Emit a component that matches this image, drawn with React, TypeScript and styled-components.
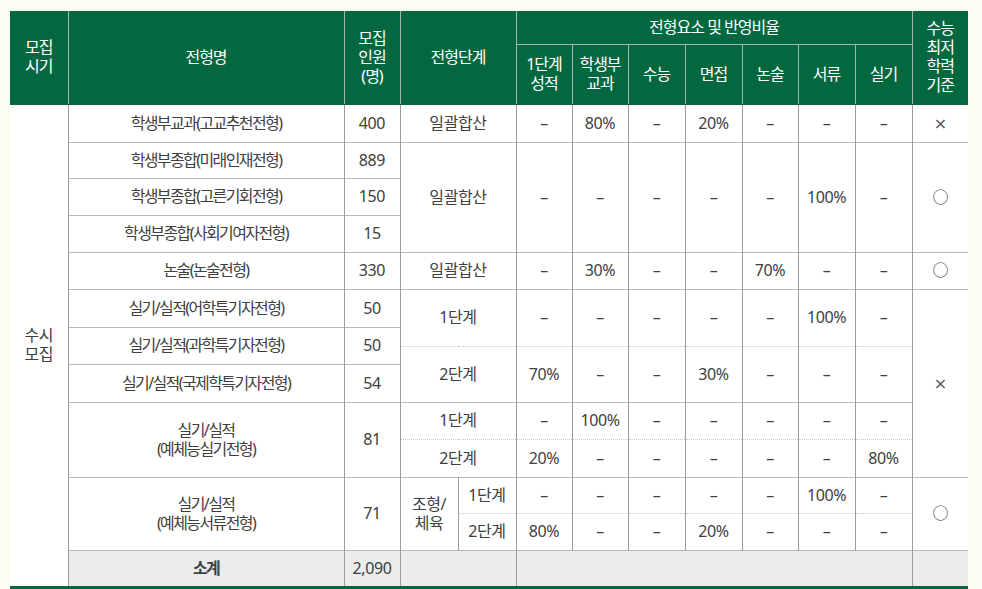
import React from 'react';
import styled, { createGlobalStyle } from 'styled-components';

const Global = createGlobalStyle`
  html, body { margin: 0; padding: 0; background: #fdfcf3; }
  body { font-family: "Noto Sans", "Noto Sans CJK KR", sans-serif; }
`;

const GREEN = '#03683f';
const V_LINE = '#9c9c9c';
const H_LINE = '#b9b9b9';
const SUB_LINE = '#c9c9c9';

const Page = styled.div`
  width: 982px;
  height: 589px;
  box-sizing: border-box;
  padding: 11px 0 0 10px;
  overflow: hidden;
`;

const Table = styled.table`
  border-collapse: collapse;
  table-layout: fixed;
  width: 958px;
  background: #fff;
  color: #404040;
  font-size: 16px;
  border-bottom: 3px solid ${GREEN};
`;

const Col = styled.col<{ $w: number }>`
  width: ${(p) => p.$w}px;
`;

const Row = styled.tr<{ $h: number }>`
  height: ${(p) => p.$h}px;
`;

const Th = styled.th<{ $first?: boolean; $last?: boolean; $split?: boolean }>`
  background: ${GREEN};
  color: #fff;
  font-weight: 400;
  line-height: 19px;
  padding: 0;
  text-align: center;
  vertical-align: middle;
  letter-spacing: -1px;
  border-left: ${(p) => (p.$first ? 'none' : '1px solid #a3b6ab')};
  border-right: ${(p) => (p.$last ? 'none' : '1px solid #a3b6ab')};
  border-bottom: ${(p) => (p.$split ? '1px solid #a3b6ab' : `1px solid ${GREEN}`)};
  border-top: none;
`;

const Td = styled.td<{
  $first?: boolean;
  $last?: boolean;
  $sub?: boolean;
  $tight?: boolean;
  $total?: boolean;
  $bold?: boolean;
}>`
  padding: 0;
  text-align: center;
  vertical-align: middle;
  line-height: 19px;
  white-space: nowrap;
  letter-spacing: ${(p) => (p.$tight ? '-1.6px' : '-0.4px')};
  font-weight: ${(p) => (p.$bold ? 700 : 400)};
  background: ${(p) => (p.$total ? '#ececec' : '#fff')};
  border-left: ${(p) => (p.$first ? 'none' : `1px solid ${V_LINE}`)};
  border-right: ${(p) => (p.$last ? 'none' : `1px solid ${V_LINE}`)};
  border-top: ${(p) => (p.$sub ? `1px dotted ${SUB_LINE}` : `1px solid ${H_LINE}`)};
  border-bottom: none;
`;

const Cross = styled.span`
  font-size: 16px;
  font-family: "DejaVu Sans", sans-serif;
  color: #555;
`;

const D = '–';

const widths = [58, 276, 56, 58, 58, 56, 56, 57, 57, 56, 57, 57, 56];

const Elements = ({ vals, span, sub }: { vals: string[]; span?: number; sub?: boolean }) => (
  <>
    {vals.map((v, i) => (
      <Td key={i} rowSpan={span} $sub={sub}>
        {v}
      </Td>
    ))}
  </>
);

export default function App() {
  return (
    <Page>
      <Global />
      <Table>
        <colgroup>
          {widths.map((w, i) => (
            <Col key={i} $w={w} />
          ))}
        </colgroup>
        <thead>
          <Row $h={33}>
            <Th rowSpan={2} $first>
              모집
              <br />
              시기
            </Th>
            <Th rowSpan={2}>전형명</Th>
            <Th rowSpan={2}>
              모집
              <br />
              인원
              <br />
              (명)
            </Th>
            <Th rowSpan={2} colSpan={2}>
              전형단계
            </Th>
            <Th colSpan={7} $split>
              전형요소 및 반영비율
            </Th>
            <Th rowSpan={2} $last>
              수능
              <br />
              최저
              <br />
              학력
              <br />
              기준
            </Th>
          </Row>
          <Row $h={60}>
            <Th>
              1단계
              <br />
              성적
            </Th>
            <Th>
              학생부
              <br />
              교과
            </Th>
            <Th>수능</Th>
            <Th>면접</Th>
            <Th>논술</Th>
            <Th>서류</Th>
            <Th>실기</Th>
          </Row>
        </thead>
        <tbody>
          <Row $h={38}>
            <Td rowSpan={16} $first>
              수시
              <br />
              모집
            </Td>
            <Td $tight>학생부교과(고교추천전형)</Td>
            <Td>400</Td>
            <Td colSpan={2}>일괄합산</Td>
            <Elements vals={[D, '80%', D, '20%', D, D, D]} />
            <Td $last>
              <Cross>×</Cross>
            </Td>
          </Row>
          <Row $h={36}>
            <Td $tight>학생부종합(미래인재전형)</Td>
            <Td>889</Td>
            <Td colSpan={2} rowSpan={3}>
              일괄합산
            </Td>
            <Elements vals={[D, D, D, D, D, '100%', D]} span={3} />
            <Td rowSpan={3} $last>
              ○
            </Td>
          </Row>
          <Row $h={37}>
            <Td $tight>학생부종합(고른기회전형)</Td>
            <Td>150</Td>
          </Row>
          <Row $h={37}>
            <Td $tight>학생부종합(사회기여자전형)</Td>
            <Td>15</Td>
          </Row>
          <Row $h={37}>
            <Td $tight>논술(논술전형)</Td>
            <Td>330</Td>
            <Td colSpan={2}>일괄합산</Td>
            <Elements vals={[D, '30%', D, D, '70%', D, D]} />
            <Td $last>○</Td>
          </Row>
          <Row $h={19}>
            <Td rowSpan={2} $tight>
              실기/실적(어학특기자전형)
            </Td>
            <Td rowSpan={2}>50</Td>
            <Td colSpan={2} rowSpan={3}>
              1단계
            </Td>
            <Elements vals={[D, D, D, D, D, '100%', D]} span={3} />
            <Td rowSpan={8} $last>
              <Cross>×</Cross>
            </Td>
          </Row>
          <Row $h={19} />
          <Row $h={19}>
            <Td rowSpan={2} $tight>
              실기/실적(과학특기자전형)
            </Td>
            <Td rowSpan={2}>50</Td>
          </Row>
          <Row $h={18}>
            <Td colSpan={2} rowSpan={3} $sub>
              2단계
            </Td>
            <Elements vals={['70%', D, D, '30%', D, D, D]} span={3} sub />
          </Row>
          <Row $h={19}>
            <Td rowSpan={2} $tight>
              실기/실적(국제학특기자전형)
            </Td>
            <Td rowSpan={2}>54</Td>
          </Row>
          <Row $h={19} />
          <Row $h={37}>
            <Td rowSpan={2} $tight>
              실기/실적
              <br />
              (예체능실기전형)
            </Td>
            <Td rowSpan={2}>81</Td>
            <Td colSpan={2}>1단계</Td>
            <Elements vals={[D, '100%', D, D, D, D, D]} />
          </Row>
          <Row $h={38}>
            <Td colSpan={2} $sub>
              2단계
            </Td>
            <Elements vals={['20%', D, D, D, D, D, '80%']} sub />
          </Row>
          <Row $h={36}>
            <Td rowSpan={2} $tight>
              실기/실적
              <br />
              (예체능서류전형)
            </Td>
            <Td rowSpan={2}>71</Td>
            <Td rowSpan={2}>
              조형/
              <br />
              체육
            </Td>
            <Td>1단계</Td>
            <Elements vals={[D, D, D, D, D, '100%', D]} />
            <Td rowSpan={2} $last>
              ○
            </Td>
          </Row>
          <Row $h={37}>
            <Td $sub>2단계</Td>
            <Elements vals={['80%', D, D, '20%', D, D, D]} sub />
          </Row>
          <Row $h={37}>
            <Td $total $bold $tight>
              소계
            </Td>
            <Td $total>2,090</Td>
            <Td $total colSpan={2} />
            <Td $total colSpan={7} />
            <Td $total $last />
          </Row>
        </tbody>
      </Table>
    </Page>
  );
}
